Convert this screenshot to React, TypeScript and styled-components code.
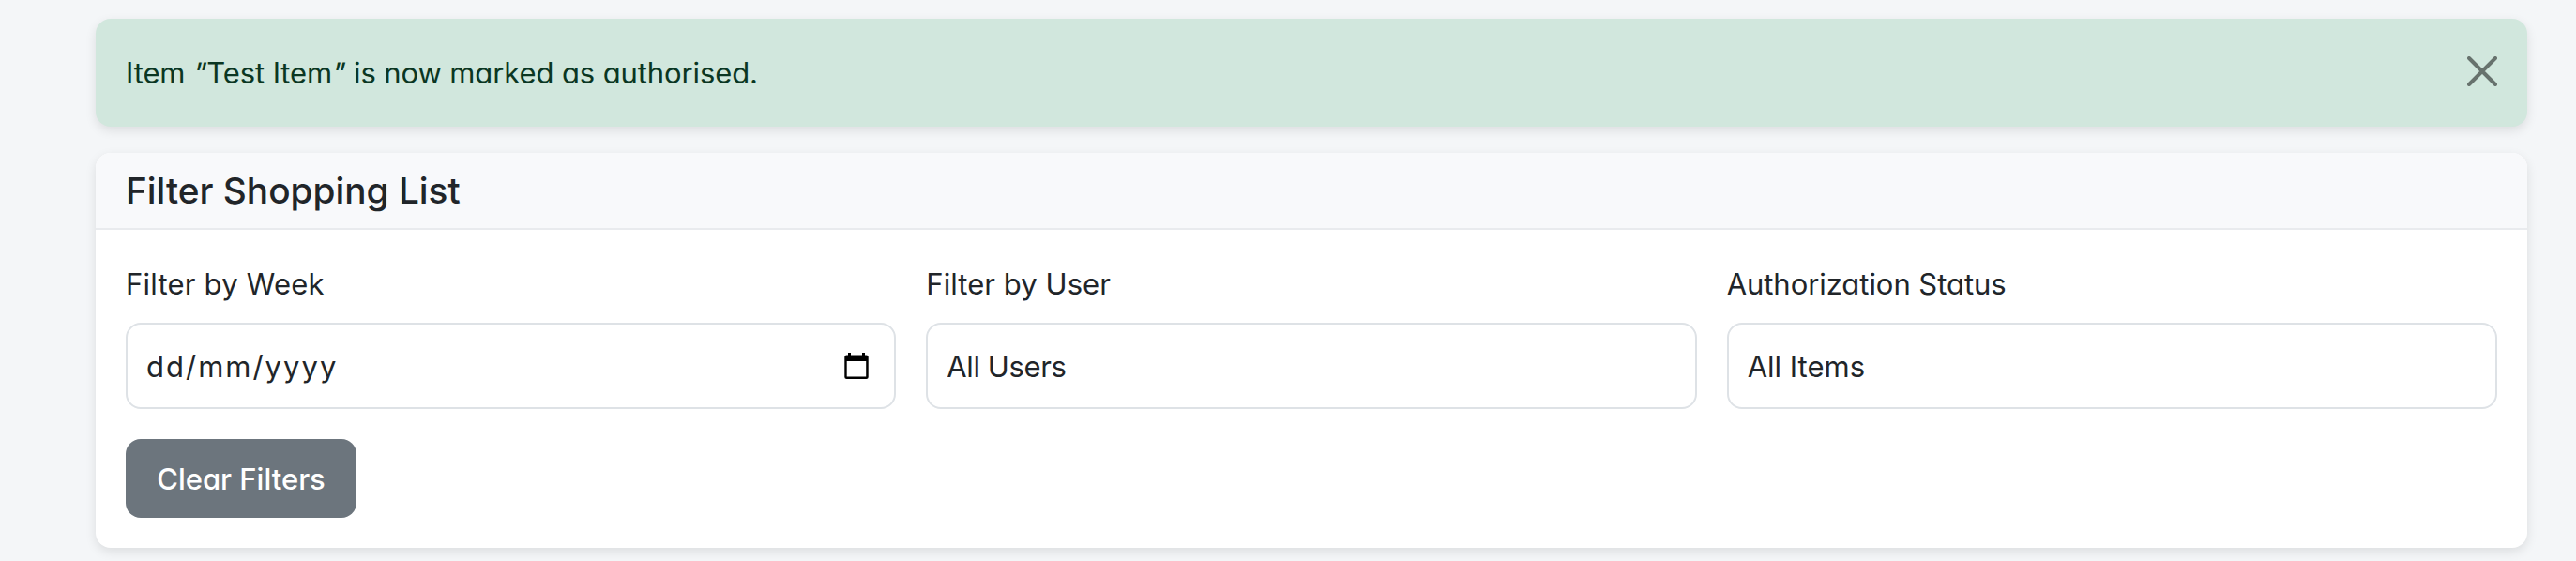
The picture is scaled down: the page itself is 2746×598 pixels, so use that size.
import React from "react";
import styled, { createGlobalStyle } from "styled-components";

const GlobalStyle = createGlobalStyle`
  *, *::before, *::after { box-sizing: border-box; }
  body {
    margin: 0;
    min-height: 100vh;
    overflow: hidden;
    background: #f4f6f8;
    color: #212529;
    font-family: Inter, "Liberation Sans", sans-serif;
    font-feature-settings: "cv11";
    font-size: 31px;
    font-weight: 400;
    line-height: 51px;
  }
`;

const Page = styled.main`
  display: flex;
  flex-direction: column;
  gap: 28px;
  padding: 20px 52px 14px 102px;
`;

const Alert = styled.div`
  display: flex;
  justify-content: space-between;
  align-items: flex-start;
  height: 115px;
  padding: 32px;
  border-radius: 16px;
  background: #d1e7dd;
  color: #0a3622;
  box-shadow: 0 4px 12px rgba(0, 0, 0, 0.1);
`;

const Text = styled.span<{ $tracking?: number }>`
  letter-spacing: ${(p) => p.$tracking ?? 0}px;
  white-space: nowrap;
`;

const Quote = styled.span`
  display: inline-block;
  transform: skewX(-14deg);
`;

const CloseButton = styled.button`
  display: flex;
  margin: 8px 0 0;
  padding: 0;
  border: 0;
  background: none;
  color: #000;
  opacity: 0.5;
`;

const Card = styled.section`
  height: 421px;
  border-radius: 16px;
  background: #fff;
  box-shadow: 0 4px 12px rgba(0, 0, 0, 0.1);
`;

const CardHeader = styled.header`
  display: flex;
  align-items: center;
  height: 82px;
  padding: 0 32px;
  border-bottom: 2px solid #e9ebee;
  border-radius: 16px 16px 0 0;
  background: #f8f9fb;
`;

const CardTitle = styled.h5`
  margin: 0;
  font-size: 38.75px;
  font-weight: 500;
  line-height: 48px;
`;

const CardBody = styled.div`
  display: flex;
  flex-direction: column;
  align-items: flex-start;
  gap: 32px;
  padding: 32px;
`;

const Filters = styled.div`
  display: grid;
  grid-template-columns: repeat(3, 1fr);
  gap: 32px;
  width: 100%;
`;

const Field = styled.div`
  display: flex;
  flex-direction: column;
  gap: 16px;
`;

const Label = styled.label`
  display: block;
  height: 51px;
`;

const Control = styled.div`
  display: flex;
  align-items: center;
  justify-content: space-between;
  height: 92px;
  padding: 0 27px 0 20px;
  border: 2px solid #dee2e6;
  border-radius: 16px;
  background: #fff;
`;

const ClearButton = styled.button`
  display: flex;
  align-items: center;
  justify-content: center;
  width: 246px;
  height: 84px;
  padding: 0;
  border: 0;
  border-radius: 16px;
  background: #6c757d;
  color: #fff;
  font: inherit;
  font-feature-settings: inherit;
  font-weight: 500;
`;

const CloseIcon = () => (
  <svg width="32" height="32" viewBox="0 0 32 32" fill="none" stroke="currentColor" strokeWidth="4" strokeLinecap="round">
    <path d="M2 2 30 30M30 2 2 30" />
  </svg>
);

const CalendarIcon = () => (
  <svg width="26" height="28" viewBox="0 0 26 28">
    <path
      fill="#000"
      fillRule="evenodd"
      d="M4 0h3v2.4h12V0h3v2.4h1.5A2.2 2.2 0 0 1 25.7 4.6v21.1A2.2 2.2 0 0 1 23.5 28h-21A2.2 2.2 0 0 1 .3 25.7V4.6A2.2 2.2 0 0 1 2.5 2.4H4ZM2.7 9v16.5h20.5V9Z"
    />
  </svg>
);

const fields = [
  { label: "Filter by Week", labelTracking: 0.22, value: "dd/mm/yyyy", tracking: 2, date: true },
  { label: "Filter by User", labelTracking: 0.06, value: "All Users", tracking: -0.4, date: false },
  { label: "Authorization Status", labelTracking: -0.05, value: "All Items", tracking: 0, date: false },
];

export default function App() {
  return (
    <>
      <GlobalStyle />
      <Page>
        <Alert role="alert">
          <Text $tracking={-0.11}>
            Item <Quote>"</Quote>Test Item<Quote>"</Quote> is now marked as authorised.
          </Text>
          <CloseButton aria-label="Close">
            <CloseIcon />
          </CloseButton>
        </Alert>
        <Card>
          <CardHeader>
            <CardTitle>
              <Text>Filter Shopping List</Text>
            </CardTitle>
          </CardHeader>
          <CardBody>
            <Filters>
              {fields.map((f) => (
                <Field key={f.label}>
                  <Label>
                    <Text $tracking={f.labelTracking}>{f.label}</Text>
                  </Label>
                  <Control>
                    <Text $tracking={f.tracking}>{f.value}</Text>
                    {f.date && <CalendarIcon />}
                  </Control>
                </Field>
              ))}
            </Filters>
            <ClearButton>
              <Text $tracking={0}>Clear Filters</Text>
            </ClearButton>
          </CardBody>
        </Card>
      </Page>
    </>
  );
}
